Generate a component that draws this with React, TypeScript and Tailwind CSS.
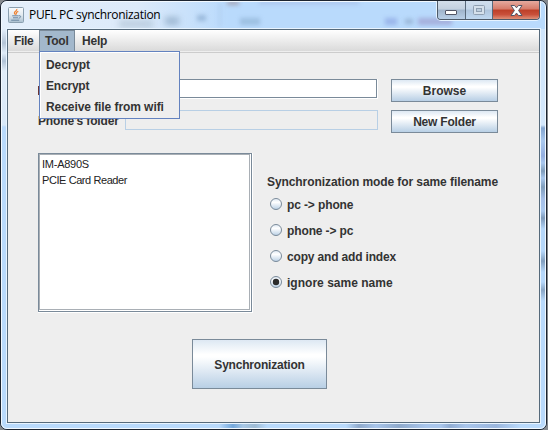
import React from "react";

const metalButton =
  "flex items-center justify-center border border-[#7a8a99] bg-[linear-gradient(180deg,#dde8f3_0%,#ffffff_30%,#ffffff_35%,#b8cfe5_100%)]";

function Radio({ label, checked, spacing }: { label: string; checked?: boolean; spacing: string }) {
  return (
    <label className="flex h-[26px] items-center">
      <svg width="13" height="13" viewBox="0 0 13 13" className="mr-[4px] shrink-0">
        <defs>
          <linearGradient id="radio" x1="0" y1="0" x2="0" y2="1">
            <stop offset="0" stopColor="#dde8f3" />
            <stop offset="0.35" stopColor="#fff" />
            <stop offset="1" stopColor="#b8cfe5" />
          </linearGradient>
        </defs>
        <circle cx="6" cy="6" r="5.5" fill="url(#radio)" stroke="#7a8a99" />
        {checked && <circle cx="6" cy="6" r="3.2" fill="#2b2b2b" />}
      </svg>
      <span className={`pt-[2px] ${spacing}`}>{label}</span>
    </label>
  );
}

function JavaIcon() {
  return (
    <svg width="16" height="16" viewBox="0 0 16 16" className="shrink-0">
      <defs>
        <linearGradient id="tile" x1="0" y1="0" x2="0" y2="1">
          <stop offset="0" stopColor="#fafcfd" />
          <stop offset="0.5" stopColor="#e3ebf1" />
          <stop offset="1" stopColor="#a9bfcf" />
        </linearGradient>
      </defs>
      <rect x="0.5" y="0.5" width="15" height="15" rx="1" fill="url(#tile)" stroke="#8ba0b0" />
      <path d="M8.8 2C9.4 4 5.8 4.4 6.4 6.2L7.6 7.8M10.3 4.4C8.3 5.2 7.7 6 8.7 7.4" fill="none" stroke="#ee8435" strokeWidth="1.2" />
      <path d="M4.2 8.8H10.6M5 10.8H10M3.2 13.2H11.2M10.8 8.8C13.4 8.2 13.2 10.8 10.6 11.2" fill="none" stroke="#5d7d9a" strokeWidth="0.9" />
    </svg>
  );
}

function WindowControls() {
  return (
    <div className="absolute right-[6px] top-0 flex h-[19px] w-[103px] overflow-hidden rounded-b-[4px] border border-t-0 border-[#4d5a69] shadow-[0_0_0_1px_#e6f3ff]">
      <div className="flex w-[28px] items-center justify-center border-r border-[#59697a] bg-[linear-gradient(180deg,#d3deea_0%,#c3d0df_45%,#a0b4cb_50%,#b9cfe7_100%)]">
        <svg width="13" height="6" viewBox="0 0 13 6" className="mt-[5px]">
          <rect x="0.5" y="0.5" width="11" height="4" rx="0.5" fill="#fff" stroke="#535666" />
        </svg>
      </div>
      <div className="flex w-[27px] items-center justify-center border-r border-[#59697a] bg-[linear-gradient(180deg,#d0deed_0%,#c5d6e8_45%,#afc5dd_50%,#c0d8f0_100%)]">
        <svg width="12" height="10" viewBox="0 0 12 10">
          <rect x="0.5" y="0.5" width="11" height="9" rx="1" fill="#d5e0eb" stroke="#8f9fb1" />
          <rect x="3.5" y="3.5" width="5" height="3" fill="#bccddd" stroke="#8f9fb1" />
        </svg>
      </div>
      <div className="flex flex-1 items-center justify-center bg-[linear-gradient(180deg,#e5aa9f_0%,#d67b69_45%,#bd3f28_50%,#c9503a_75%,#df9078_100%)]">
        <svg width="13" height="11" viewBox="0 0 13 11">
          <path d="M1 0.5H4.5L6.5 2.8 8.5 0.5H12L8.6 5.5 12 10.5H8.5L6.5 8.1 4.5 10.5H1L4.4 5.5Z" fill="#fff" stroke="#535666" strokeWidth="1" />
        </svg>
      </div>
    </div>
  );
}

/* Blurred shapes showing through the translucent window frame. */
function Glass() {
  return (
    <div className="pointer-events-none absolute inset-0 overflow-hidden rounded-[5px]">
      <div className="absolute left-0 top-[28px] h-[395px] w-[6px] bg-[linear-gradient(180deg,#e4effb_0,#b4c4d6_14px,#e0ecf8_24px,#b0c2d6_32px,#e0ecf8_42px,#d8e8f8_96px,#b9dafc_98px)]" />
      <div className="absolute right-0 top-[28px] h-[395px] w-[6px] bg-[linear-gradient(180deg,#cfe5fc_0,#d4e8fc_96px,#82a4cf_99px,#a9c8ee_112px,#93aee0_127px,#a9c8ee_134px,#809dbb_142px,#a9c8ee_149px,#7f9dbb_158px,#a5bfe8_170px,#a9c8ee_182px,#7e9aba_189px,#b5d7fa_200px,#b5d7fa_222px,#829fbf_232px,#b5d7fa_243px,#b5d7fa_253px,#89a6c6_261px,#b9dafc_272px)]" />
      <div className="absolute bottom-0 left-0 h-[6px] w-full bg-[linear-gradient(90deg,#b9dafc_0,#b9dafc_218px,#74a8dc_232px,#a8c8e6_242px,#9ebbd4_254px,#b9dafc_266px,#b9dafc_345px,#8faacc_358px,#a8c5ea_375px,#8faacc_398px,#a9c6ec_425px,#a9c6ec_440px,#91add3_449px,#a9c6ec_465px,#9ab6dd_495px,#b9dafc_520px)]" />
      <div className="absolute left-[118px] top-[19px] h-[8px] w-[34px] bg-[#9db4c5]/50 blur-[3px]" />
      <div className="absolute left-[164px] top-[16px] h-[8px] w-[14px] bg-[#7d9bb8]/60 blur-[3px]" />
      <div className="absolute left-[196px] top-[14px] h-[6px] w-[9px] bg-[#7196bd]/50 blur-[2px]" />
      <div className="absolute left-[218px] top-[2px] h-[24px] w-[2px] bg-[#9dbce3]/50 blur-[2px]" />
      <div className="absolute left-[226px] top-0 h-[4px] w-[12px] bg-[#9c8f99]/70 blur-[2px]" />
      <div className="absolute left-[258px] top-0 h-[3px] w-[100px] bg-[#9aa7d8]/50 blur-[2px]" />
      <div className="absolute left-[239px] top-[17px] h-[7px] w-[20px] bg-[#82a6c8]/50 blur-[2px]" />
      <div className="absolute left-[384px] top-[17px] h-[7px] w-[12px] bg-[#7c91da]/50 blur-[2px]" />
      <div className="absolute left-[404px] top-[18px] h-[5px] w-[8px] bg-[#829cbc]/60 blur-[2px]" />
      <div className="absolute left-[417px] top-[17px] h-[7px] w-[34px] bg-[#9186bd]/50 blur-[2px]" />
    </div>
  );
}

export default function App() {
  return (
    <div className="h-[430px] w-[548px] bg-[#85898e]">
      <div className="relative flex h-[430px] w-[547px] flex-col overflow-hidden rounded-[7px] border border-[#1c2430] bg-[#b9dafc] bg-[linear-gradient(90deg,#e4effb_0%,#dceafa_25%,#b9dafc_42%)] font-['Liberation_Sans',Arial,sans-serif] text-[12px] font-bold text-[#333]">
        <Glass />
        <div className="pointer-events-none absolute inset-0 rounded-[6px] border border-[#f2f9ff]" />
        <WindowControls />
        <div className="relative flex h-[28px] shrink-0 items-center pl-[7px]">
          <JavaIcon />
          <span className="ml-[5px] font-['Open_Sans','Noto_Sans',sans-serif] text-[12px] font-normal tracking-[-0.3px] text-black">PUFL PC synchronization</span>
        </div>
        <div className="relative mx-[6px] flex h-[394px] flex-col border border-[#566a7b] bg-[#eee] outline outline-[#e8f4ff]">
          <nav className="relative flex h-[23px] shrink-0 border-b border-[#ccc] bg-[linear-gradient(180deg,#fff_0%,#dadada_95%,#eee_96%)]">
            <div className="flex h-[21px] w-[31px] items-center pl-[6px] tracking-[-0.35px]">File</div>
            <div className="flex h-[21px] w-[36px] items-center border border-b-0 border-[#7a8a99] bg-[#a3b8cc] pl-[5px] tracking-[-0.2px]">Tool</div>
            <div className="flex h-[21px] items-center pl-[7px] tracking-[-0.2px]">Help</div>
            <div className="absolute left-[31px] top-[21px] z-10 flex h-[68px] w-[141px] flex-col border border-[#6382bf] bg-[#eee] pl-[6px] pt-[2px] shadow-[inset_1px_1px_#fff]">
              <span className="flex h-[21px] items-center tracking-[-0.1px]">Decrypt</span>
              <span className="flex h-[21px] items-center tracking-[-0.2px]">Encrypt</span>
              <span className="flex h-[21px] items-center tracking-[-0.07px]">Receive file from wifi</span>
            </div>
          </nav>
          <main className="flex flex-col pl-[30px]">
            <div className="mt-[26px] flex h-[23px]">
              <span className="mr-[86px] mt-[7px] h-[9px] w-px bg-[#6b3434]" />
              <div className="mr-[13px] h-[20px] w-[253px] border-b border-r border-white">
                <div className="h-[19px] w-[252px] border border-[#7a8a99] bg-white" />
              </div>
              <div className={`${metalButton} w-[107px]`}>Browse</div>
            </div>
            <div className="mt-[8px] flex h-[23px]">
              <span className="flex h-[21px] w-[87px] items-center tracking-[-0.15px]">Phone's folder</span>
              <div className="mr-[13px] h-[20px] w-[253px] border border-[#b8cfe5]" />
              <div className={`${metalButton} w-[107px] tracking-[-0.2px]`}>New Folder</div>
            </div>
            <div className="mt-[20px] flex">
              <div className="h-[160px] w-[215px] border-b border-r border-white">
                <div className="h-[159px] w-[214px] border border-[#7a8a99] bg-white pb-px pr-px">
                  <div className="h-full border border-[#a9afb5] pl-[2px] pt-[1px] text-[11px] font-normal leading-[16px] text-[#222]">
                    <div className="tracking-[-0.25px]">IM-A890S</div>
                    <div className="tracking-[-0.42px]">PCIE Card Reader</div>
                  </div>
                </div>
              </div>
              <div className="ml-[14px] mt-[20px]">
                <div className="flex h-[18px] items-center tracking-[-0.08px]">Synchronization mode for same filename</div>
                <div className="pl-[3px]">
                  <Radio label="pc -> phone" spacing="tracking-[-0.12px]" />
                  <Radio label="phone -> pc" spacing="tracking-[-0.12px]" />
                  <Radio label="copy and add index" spacing="tracking-[-0.17px]" />
                  <Radio label="ignore same name" spacing="tracking-[0.02px]" checked />
                </div>
              </div>
            </div>
            <div className={`${metalButton} ml-[154px] mt-[26px] h-[50px] w-[135px] pt-[2px] tracking-[-0.2px]`}>Synchronization</div>
          </main>
        </div>
      </div>
    </div>
  );
}
